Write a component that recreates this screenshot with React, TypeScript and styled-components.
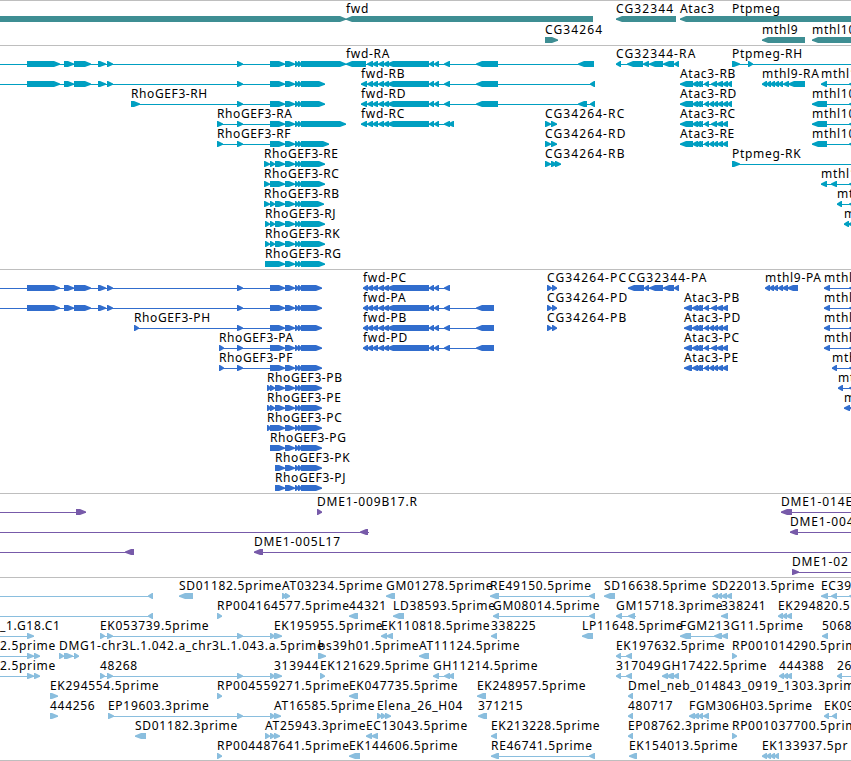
import React from "react";
import styled, { createGlobalStyle } from "styled-components";

type Span = [number, number];

interface Feature {
  label?: string;
  x: number;
  end: number;
  dir: "fwd" | "rev";
  blocks: Span[];
}

interface TrackData {
  name: string;
  color: string;
  gap?: number;
  padBottom?: number;
  rows: Feature[][];
}

const VIEW_WIDTH = 851;
const EDGE = 870;

const feature = (
  dir: Feature["dir"],
  label: string,
  blocks: Span[],
  x = blocks[0][0],
  end = blocks[blocks.length - 1][1]
): Feature => ({ dir, label, blocks, x, end });

const fwd = (label: string, blocks: Span[], x?: number, end?: number) =>
  feature("fwd", label, blocks, x, end);

const rev = (label: string, blocks: Span[], x?: number, end?: number) =>
  feature("rev", label, blocks, x, end);

// exons shared between the isoforms of one gene
const rhoHead: Span[] = [[27, 60], [64, 74], [74, 91], [98, 106], [107, 113], [237, 243]];
const rhoTail = (end: number): Span[] => [[285, 295], [295, 299], [298, 302], [301, end]];
const rhoBody = (end: number): Span[] => [[270, 285], ...rhoTail(end)];
const rhoSplit = (end: number): Span[] => [[270, 275], [275, 285], ...rhoTail(end)];

const fwdCore: Span[] = [[367, 373], [372, 378], [378, 384], [383, 389], [387, 429], [429, 434], [434, 439]];
const fwdBody: Span[] = [...fwdCore, [444, 450]];

const atacMid: Span[] = [[692, 698], [695, 701], [698, 703], [704, 709]];
const atacB: Span[] = [...atacMid, [711, 717], [716, 723], [722, 728]];
const atacD: Span[] = [...atacMid, [709, 714], [713, 718], [717, 723], [722, 728]];

const tracks: TrackData[] = [
  {
    name: "gene",
    color: "#3e8e93",
    gap: 1,
    rows: [
      [
        fwd("", [[-20, 346]]),
        rev("fwd", [[346, 593]]),
        rev("CG32344", [[616, 676]]),
        rev("Atac3", [[680, 732]]),
        fwd("Ptpmeg", [[731, EDGE]], 732),
      ],
      [fwd("CG34264", [[545, 558]]), rev("mthl9", [[762, 805]]), rev("mthl10", [[812, EDGE]])],
    ],
  },
  {
    name: "transcript",
    color: "#009fc1",
    rows: [
      [
        fwd("", [...rhoHead, ...rhoBody(346)], 0),
        rev("fwd-RA", [[346, 366], ...fwdBody, [476, 498], [578, 594]]),
        rev("CG32344-RA", [[616, 621], [627, 643], [643, 649], [649, 663], [663, 674], [674, 679]]),
        fwd("Ptpmeg-RH", [[732, 740], [748, 753]], 732, EDGE),
      ],
      [
        fwd("", [...rhoHead, ...rhoBody(325)], 0),
        rev("fwd-RB", [[361, 367], ...fwdBody, [476, 498], [590, 595]]),
        rev("Atac3-RB", [[680, 693], ...atacB, [727, 732]]),
        rev("mthl9-RA", [[762, 767], [766, 771], [770, 775], [774, 779], [778, 783], [783, 789], [788, 805]]),
        rev("mthl1", [[821, 827], [849, EDGE]]),
      ],
      [
        fwd("RhoGEF3-RH", [[131, 140], [237, 243], ...rhoBody(325)]),
        rev("fwd-RD", [[361, 367], ...fwdBody, [476, 498], [578, 587], [590, 595]]),
        rev("Atac3-RD", [[680, 693], ...atacD, [727, 732]]),
        rev("mthl10", [[812, 827], [849, EDGE]]),
      ],
      [
        fwd("RhoGEF3-RA", [[217, 223], [237, 243], ...rhoBody(346)]),
        rev("fwd-RC", [[361, 367], ...fwdBody, [448, 454]]),
        fwd("CG34264-RC", [[545, 551], [551, 557]]),
        rev("Atac3-RC", [[680, 693], ...atacB]),
        rev("mthl10", [[812, 827], [849, EDGE]]),
      ],
      [
        fwd("RhoGEF3-RF", [[217, 223], [237, 243], ...rhoBody(329)]),
        fwd("CG34264-RD", [[545, 551], [551, 557]]),
        rev("Atac3-RE", [[680, 693], ...atacD]),
        rev("mthl10", [[812, 827], [849, EDGE]]),
      ],
      [
        fwd("RhoGEF3-RE", [[264, 270], ...rhoSplit(325)]),
        fwd("CG34264-RB", [[545, 551], [551, 557], [555, 561]]),
        fwd("Ptpmeg-RK", [[732, 740]], 732, EDGE),
      ],
      [
        fwd("RhoGEF3-RC", [[264, 270], ...rhoBody(325)]),
        rev("mthl1", [[821, 827], [831, 837], [849, EDGE]]),
      ],
      [fwd("RhoGEF3-RB", [[264, 270], ...rhoSplit(324)]), rev("mt", [[837, 842], [849, EDGE]])],
      [fwd("RhoGEF3-RJ", [[265, 270], ...rhoSplit(325)]), rev("m", [[844, 849], [848, EDGE]])],
      [fwd("RhoGEF3-RK", [[265, 270], ...rhoSplit(325)])],
      [fwd("RhoGEF3-RG", [[265, 285], ...rhoTail(325)])],
    ],
  },
  {
    name: "protein",
    color: "#316dcd",
    rows: [
      [
        fwd("", [...rhoHead, ...rhoBody(322)], 0),
        rev("fwd-PC", [[363, 368], ...fwdBody]),
        fwd("CG34264-PC", [[547, 552], [552, 557]]),
        rev("CG32344-PA", [[628, 644], [644, 649], [649, 663], [663, 674], [674, 679]]),
        rev("mthl9-PA", [[765, 770], [769, 774], [773, 778], [778, 783], [782, 788], [787, 798]]),
        rev("mthl", [[824, 830], [849, EDGE]]),
      ],
      [
        fwd("", [...rhoHead, ...rhoBody(322)], 0),
        rev("fwd-PA", [[363, 368], ...fwdBody, [476, 494]]),
        fwd("CG34264-PD", [[547, 552], [552, 557]]),
        rev("Atac3-PB", [[684, 692], ...atacB]),
        rev("mthl", [[824, 830], [849, EDGE]]),
      ],
      [
        fwd("RhoGEF3-PH", [[134, 139], [237, 243], ...rhoBody(322)]),
        rev("fwd-PB", [[363, 368], ...fwdBody, [476, 494]]),
        fwd("CG34264-PB", [[547, 552], [552, 557]]),
        rev("Atac3-PD", [[684, 692], ...atacD]),
        rev("mthl", [[824, 830], [849, EDGE]]),
      ],
      [
        fwd("RhoGEF3-PA", [[219, 224], [237, 243], ...rhoBody(322)]),
        rev("fwd-PD", [[363, 368], ...fwdBody, [476, 494]]),
        rev("Atac3-PC", [[684, 692], ...atacB]),
        rev("mthl", [[824, 830], [849, EDGE]]),
      ],
      [
        fwd("RhoGEF3-PF", [[219, 224], [237, 243], ...rhoBody(322)]),
        rev("Atac3-PE", [[684, 692], ...atacD]),
        rev("mth", [[832, 837], [849, EDGE]]),
      ],
      [fwd("RhoGEF3-PB", [[267, 271], ...rhoSplit(322)]), rev("mt", [[838, 843], [849, EDGE]])],
      [fwd("RhoGEF3-PE", [[267, 271], ...rhoSplit(322)]), rev("m", [[844, 850], [849, EDGE]])],
      [fwd("RhoGEF3-PC", [[267, 271], ...rhoBody(322)])],
      [fwd("RhoGEF3-PG", rhoBody(322))],
      [fwd("RhoGEF3-PK", [[275, 285], ...rhoTail(322)])],
      [fwd("RhoGEF3-PJ", [[275, 285], ...rhoTail(322)])],
    ],
  },
  {
    name: "bac",
    color: "#775aa9",
    rows: [
      [
        fwd("", [[76, 86]], 0),
        fwd("DME1-009B17.R", [[317, 322]]),
        rev("DME1-014E", [[781, 792]], 781, EDGE),
      ],
      [rev("", [[360, 368]], 0, 369), rev("DME1-004", [[790, 798]], 790, EDGE)],
      [rev("", [[125, 134]], 0), rev("DME1-005L17", [[254, 263]], 254, EDGE)],
      [fwd("DME1-02", [[792, 799]], 792, EDGE)],
    ],
  },
  {
    name: "est",
    color: "#8abede",
    padBottom: 1,
    rows: [
      [
        rev("", [[148, 153]], 0),
        rev("SD01182.5prime", [[179, 193]]),
        fwd("AT03234.5prime", [[282, 287], [285, 290]]),
        rev("GM01278.5prime", [[386, 395]]),
        rev("RE49150.5prime", [[490, 499], [589, 595]]),
        rev("SD16638.5prime", [[604, 615]]),
        rev("SD22013.5prime", [[712, 718], [717, 722], [721, 727], [726, 732]]),
        rev("EC39", [[821, 828], [831, 837], [849, EDGE]]),
      ],
      [
        rev("", [[148, 153]], 0),
        fwd("RP004164577.5prime", [[217, 222]]),
        rev("44321", [[349, 358]]),
        rev("LD38593.5prime", [[393, 404]]),
        rev("GM08014.5prime", [[493, 499], [589, 595]]),
        rev("GM15718.3prime", [[616, 622], [628, 635]], 616, 636),
        rev("338241", [[721, 728]]),
        rev("EK294820.5", [[778, 783], [782, 787], [786, 792]]),
      ],
      [
        fwd("_1.G18.C1", [[27, 34]], 0),
        fwd("EK053739.5prime", [[100, 105], [107, 113], [237, 243]], 100, 270),
        fwd("EK195955.5prime", [[270, 275], [274, 282]], 274),
        rev("EK110818.5prime", [[381, 387], [386, 393]]),
        rev("338225", [[491, 497]]),
        rev("LP11648.5prime", [[582, 593]]),
        rev("FGM213G11.5prime", [[680, 691], [714, 722], [721, 728]]),
        rev("5068", [[822, 828]]),
      ],
      [
        fwd("2.5prime", [[27, 34], [34, 40]], 0),
        fwd("DMG1-chr3L.1.042.a_chr3L.1.043.a.5prime", [[59, 64], [64, 73], [74, 79]]),
        fwd("bs39h01.5prime", [[318, 326]]),
        rev("AT11124.5prime", [[419, 429]]),
        rev("EK197632.5prime", [[616, 621], [626, 632]]),
        fwd("RP001014290.5prim", [[732, 737]]),
      ],
      [
        fwd("2.5prime", [[27, 34], [34, 40]], 0),
        fwd("48268", [[100, 105], [107, 113], [237, 243]], 100, 270),
        fwd("313944", [[270, 275], [274, 282]], 274),
        fwd("EK121629.5prime", [[320, 325]]),
        rev("GH11214.5prime", [[433, 439], [444, 450], [448, 454]]),
        rev("317049", [[616, 621], [626, 632]]),
        rev("GH17422.5prime", [[662, 668], [666, 674], [673, 679]]),
        rev("444388", [[779, 784], [783, 788], [786, 792]]),
        rev("26", [[837, 842]], 837, EDGE),
      ],
      [
        fwd("EK294554.5prime", [[50, 58]]),
        fwd("RP004559271.5prime", [[217, 222]]),
        rev("EK047735.5prime", [[349, 358]]),
        rev("EK248957.5prime", [[477, 486]]),
        rev("Dmel_neb_014843_0919_1303.3prim", [[628, 633]]),
      ],
      [
        fwd("444256", [[50, 58]]),
        fwd("EP19603.3prime", [[108, 114], [237, 243]], 108, 270),
        fwd("AT16585.5prime", [[270, 275], [274, 281]], 274),
        fwd("Elena_26_H04", [[377, 382], [381, 386], [385, 391]]),
        rev("371215", [[478, 487]]),
        rev("480717", [[628, 633]]),
        rev("FGM306H03.5prime", [[689, 695], [693, 699], [698, 703], [703, 709]]),
        rev("EK09", [[824, 829], [832, 837]]),
      ],
      [
        rev("SD01182.3prime", [[135, 146]]),
        fwd("AT25943.3prime", [[265, 270], [270, 275], [274, 280]]),
        rev("EC13043.5prime", [[366, 372], [371, 378]]),
        rev("EK213228.5prime", [[491, 497]]),
        rev("EP08762.3prime", [[628, 633]]),
        fwd("RP001037700.5prim", [[732, 737]]),
      ],
      [
        fwd("RP004487641.5prime", [[217, 222]]),
        rev("EK144606.5prime", [[349, 360]]),
        rev("RE46741.5prime", [[491, 499], [589, 595]]),
        rev("EK154013.5prime", [[629, 637]]),
        rev("EK133937.5pr", [[762, 767], [766, 771], [770, 775], [774, 779]]),
      ],
    ],
  },
];

const GlobalStyle = createGlobalStyle`
  body {
    margin: 0;
    background: #fff;
  }
`;

const Browser = styled.main`
  display: flex;
  flex-direction: column;
  width: ${VIEW_WIDTH}px;
  overflow: hidden;
  border-bottom: 1px solid #bebebe;
`;

const Track = styled.section<{ $color: string; $gap: number; $padBottom: number }>`
  display: flex;
  flex-direction: column;
  gap: ${(p) => p.$gap}px;
  padding: 1px 0 ${(p) => p.$padBottom}px;
  border-top: 1px solid #bebebe;
  color: ${(p) => p.$color};
`;

// labels reach a little above their lane
const Lane = styled.svg`
  display: block;
  flex: none;
  width: ${VIEW_WIDTH}px;
  height: 20px;
  overflow: visible;
`;

const Intron = styled.rect`
  fill: currentColor;
`;

const Block = styled.polygon`
  fill: currentColor;
`;

const Label = styled.text<{ $tracking: number }>`
  fill: #000;
  font-family: "Noto Sans", "Open Sans", sans-serif;
  font-size: 12px;
  letter-spacing: ${(p) => p.$tracking}px;
`;

const labelTracking = (label: string) => {
  if (label.startsWith("CG")) return 1.1;
  if (label.startsWith("DME1")) return 0.85;
  if (label.startsWith("Rho")) return 0.6;
  return 0.7;
};

// block pointing in the direction of the strand, short ones become a plain arrow head
const blockPoints = ([start, end]: Span, dir: Feature["dir"]) => {
  const width = end - start;
  const head = width > 6 ? 6 : width - 1;
  if (dir === "fwd") {
    const neck = end - head;
    return `${start},14 ${neck},14 ${end},16.5 ${end},17.8 ${neck},20 ${start},20`;
  }
  const neck = start + head;
  return `${end},14 ${neck},14 ${start},16.5 ${start},17.8 ${neck},20 ${end},20`;
};

const FeatureGlyph = ({ item }: { item: Feature }) => {
  const lineStart = Math.min(item.x, item.blocks[0][0]);
  return (
    <g>
      <Intron x={lineStart} y={17} width={item.end - lineStart} height={1} />
      {item.blocks.map((block) => (
        <Block key={block[0]} points={blockPoints(block, item.dir)} />
      ))}
      {item.label && (
        <Label x={item.x} y={11} $tracking={labelTracking(item.label)}>
          {item.label}
        </Label>
      )}
    </g>
  );
};

const App = () => (
  <>
    <GlobalStyle />
    <Browser>
      {tracks.map((track) => (
        <Track
          key={track.name}
          $color={track.color}
          $gap={track.gap ?? 0}
          $padBottom={track.padBottom ?? 2}
        >
          {track.rows.map((row, i) => (
            <Lane key={i}>
              {row.map((item, j) => (
                <FeatureGlyph key={j} item={item} />
              ))}
            </Lane>
          ))}
        </Track>
      ))}
    </Browser>
  </>
);

export default App;
